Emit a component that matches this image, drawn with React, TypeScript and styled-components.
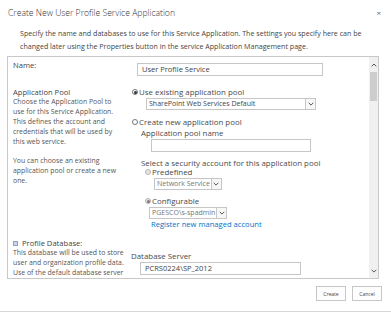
import React from "react";
import styled, { createGlobalStyle } from "styled-components";

const Global = createGlobalStyle`
  html, body { margin: 0; padding: 0; background: #fff; }
  body { width: 391px; height: 314px; overflow: hidden; font-family: "Open Sans", "Noto Sans", sans-serif; color: #444; }
`;

const Dialog = styled.div`
  width: 391px;
  height: 314px;
  display: flex;
  flex-direction: column;
  box-sizing: border-box;
  position: relative;
`;

const TitleBar = styled.div`
  display: flex;
  justify-content: space-between;
  align-items: center;
  padding: 5px 8px 0 8px;
  height: 15px;
`;

const Title = styled.div`
  font-size: 8.6px;
  font-weight: 300;
  color: #333;
`;

const Close = styled.div`
  font-size: 8px;
  color: #666;
  margin-right: 2px;
`;

const Intro = styled.div`
  padding: 7px 12px 0 20px;
  font-size: 7.1px;
  line-height: 12.5px;
  color: #444;
  height: 29px;
`;

const Panel = styled.div`
  margin: 0 12px 0 7px;
  height: 223px;
  border: 1px solid #c8c8c8;
  display: flex;
  box-sizing: border-box;
  overflow: hidden;
`;

const Content = styled.div`
  flex: 1;
  overflow: hidden;
  padding: 3px 0 0 5px;
`;

const Section = styled.div<{ $h: number }>`
  display: grid;
  grid-template-columns: 118px 1fr;
  height: ${(p) => p.$h}px;
`;

const LeftCol = styled.div`
  font-size: 6.9px;
  line-height: 10px;
  color: #555;
  white-space: nowrap;
`;

const LeftTitle = styled.div`
  font-size: 7.6px;
  color: #444;
  line-height: 10px;
  display: flex;
  align-items: center;
  gap: 4px;
`;

const Para = styled.p`
  margin: 0 0 9px 0;
`;

const RightCol = styled.div`
  display: flex;
  flex-direction: column;
  font-size: 7.9px;
  color: #4a4a4a;
`;

const TextBox = styled.div<{ $w: number; $indent: number; $top?: number }>`
  width: ${(p) => p.$w}px;
  height: 13px;
  margin-left: ${(p) => p.$indent}px;
  margin-top: ${(p) => p.$top ?? 0}px;
  border: 1px solid #c6c6c6;
  box-sizing: border-box;
  font-size: 7.5px;
  line-height: 11px;
  padding-left: 4px;
  color: #444;
  white-space: nowrap;
`;

const SelectBox = styled.div<{ $indent: number; $top?: number; $disabled?: boolean }>`
  display: inline-flex;
  align-self: flex-start;
  height: 12px;
  margin-left: ${(p) => p.$indent}px;
  margin-top: ${(p) => p.$top ?? 0}px;
  border: 1px solid #c6c6c6;
  box-sizing: border-box;
  color: ${(p) => (p.$disabled ? "#777" : "#444")};
  font-size: 7px;
  line-height: 10px;
`;

const SelectText = styled.span<{ $w?: number }>`
  padding: 0 1px 0 2px;
  ${(p) => (p.$w ? `width: ${p.$w}px;` : "")}
  white-space: nowrap;
`;

const Arrow = styled.span`
  width: 9px;
  height: 10px;
  border-left: 1px solid #c6c6c6;
  background: #f7f7f7;
  display: flex;
  align-items: center;
  justify-content: center;
`;

const RadioLine = styled.div<{ $indent: number; $top?: number }>`
  display: flex;
  align-items: center;
  gap: 1px;
  margin-left: ${(p) => p.$indent}px;
  margin-top: ${(p) => p.$top ?? 0}px;
  height: 10px;
  white-space: nowrap;
`;

const Radio = styled.span<{ $checked?: boolean; $disabled?: boolean }>`
  width: 6px;
  height: 6px;
  border-radius: 50%;
  border: 0.8px solid ${(p) => (p.$disabled ? "#b5b5b5" : "#777")};
  background: ${(p) => (p.$disabled ? "#e6e6e6" : "#fff")};
  box-sizing: border-box;
  display: flex;
  align-items: center;
  justify-content: center;
  &::after {
    content: "";
    width: 3px;
    height: 3px;
    border-radius: 50%;
    background: ${(p) => (p.$checked ? (p.$disabled ? "#777" : "#333") : "transparent")};
  }
`;

const Label = styled.div<{ $indent: number; $top?: number }>`
  margin-left: ${(p) => p.$indent}px;
  margin-top: ${(p) => p.$top ?? 0}px;
  height: 10px;
  line-height: 10px;
  white-space: nowrap;
`;

const Link = styled.a`
  margin-left: 20px;
  margin-top: 0px;
  color: #0072c6;
  font-size: 7.6px;
  line-height: 10px;
  text-decoration: none;
  white-space: nowrap;
  align-self: flex-start;
`;

const Scrollbar = styled.div`
  width: 9px;
  background: #f0f0f0;
  display: flex;
  flex-direction: column;
  align-items: center;
`;

const ScrollBtn = styled.div`
  height: 15px;
  width: 9px;
  display: flex;
  align-items: center;
  justify-content: center;
`;

const Thumb = styled.div`
  width: 7px;
  height: 29px;
  background: #cdcdcd;
`;

const Track = styled.div`
  flex: 1;
`;

const Footer = styled.div`
  display: flex;
  justify-content: flex-end;
  gap: 6px;
  padding: 7px 9px 0 0;
`;

const Button = styled.button`
  width: 30px;
  min-width: 0;
  height: 15px;
  border: 1px solid #c6c6c6;
  background: #fdfdfd;
  font-family: "Open Sans", sans-serif;
  font-size: 5px;
  color: #444;
  padding: 0;
  margin: 0;
`;

const BottomLine = styled.div`
  position: absolute;
  left: 0;
  right: 0;
  bottom: 2px;
  height: 1px;
  background: #d8d8d8;
`;

const Chevron = ({ dir }: { dir: "up" | "down" }) => (
  <svg width="6" height="4" viewBox="0 0 6 4">
    <path
      d={dir === "up" ? "M0.7 3.3 L3 1 L5.3 3.3" : "M0.7 0.8 L3 3.1 L5.3 0.8"}
      fill="none"
      stroke="#555"
      strokeWidth="1"
    />
  </svg>
);

const DbIcon = () => (
  <svg width="5" height="5" viewBox="0 0 5 5">
    <rect x="0" y="0" width="5" height="5" fill="#8aa3c4" />
    <rect x="1" y="1" width="3" height="3" fill="#c9d6e8" />
  </svg>
);

export default function App() {
  return (
    <>
      <Global />
      <Dialog>
        <TitleBar>
          <Title>Create New User Profile Service Application</Title>
          <Close>×</Close>
        </TitleBar>
        <Intro>
          Specify the name and databases to use for this Service Application. The settings you specify here can be
          changed later using the Properties button in the service Application Management page.
        </Intro>
        <Panel>
          <Content>
            <Section $h={27}>
              <LeftCol>
                <LeftTitle>Name:</LeftTitle>
              </LeftCol>
              <RightCol>
                <TextBox $w={186} $indent={6} $top={3}>User Profile Service</TextBox>
              </RightCol>
            </Section>
            <Section $h={151}>
              <LeftCol>
                <LeftTitle>Application Pool</LeftTitle>
                <Para>
                  Choose the Application Pool to
                  <br />
                  use for this Service Application.
                  <br />
                  This defines the account and
                  <br />
                  credentials that will be used by
                  <br />
                  this web service.
                </Para>
                <Para>
                  You can choose an existing
                  <br />
                  application pool or create a new
                  <br />
                  one.
                </Para>
              </LeftCol>
              <RightCol>
                <RadioLine $indent={1}>
                  <Radio $checked />
                  Use existing application pool
                </RadioLine>
                <SelectBox $indent={15} $top={1}>
                  <SelectText $w={155}>SharePoint Web Services Default</SelectText>
                  <Arrow><Chevron dir="down" /></Arrow>
                </SelectBox>
                <RadioLine $indent={1} $top={7}>
                  <Radio />
                  Create new application pool
                </RadioLine>
                <Label $indent={10} $top={1}>Application pool name</Label>
                <TextBox $w={160} $indent={20} $top={1}></TextBox>
                <Label $indent={10} $top={6}>Select a security account for this application pool</Label>
                <RadioLine $indent={14} $top={-1}>
                  <Radio $disabled />
                  Predefined
                </RadioLine>
                <SelectBox $indent={23} $top={1} $disabled>
                  <SelectText>Network Service</SelectText>
                  <Arrow><Chevron dir="down" /></Arrow>
                </SelectBox>
                <RadioLine $indent={14} $top={6}>
                  <Radio $checked $disabled />
                  Configurable
                </RadioLine>
                <SelectBox $indent={18} $top={1} $disabled>
                  <SelectText>PGESCO\s-spadmin</SelectText>
                  <Arrow><Chevron dir="down" /></Arrow>
                </SelectBox>
                <Link href="#">Register new managed account</Link>
              </RightCol>
            </Section>
            <Section $h={60}>
              <LeftCol>
                <LeftTitle>
                  <DbIcon />
                  Profile Database:
                </LeftTitle>
                <Para>
                  This database will be used to store
                  <br />
                  user and organization profile data.
                  <br />
                  Use of the default database server
                </Para>
              </LeftCol>
              <RightCol>
                <Label $indent={0} $top={13}>Database Server</Label>
                <TextBox $w={161} $indent={9} $top={1}>PCRS0224\SP_2012</TextBox>
              </RightCol>
            </Section>
          </Content>
          <Scrollbar>
            <ScrollBtn><Chevron dir="up" /></ScrollBtn>
            <Thumb />
            <Track />
            <ScrollBtn><Chevron dir="down" /></ScrollBtn>
          </Scrollbar>
        </Panel>
        <Footer>
          <Button>Create</Button>
          <Button>Cancel</Button>
        </Footer>
        <BottomLine />
      </Dialog>
    </>
  );
}
